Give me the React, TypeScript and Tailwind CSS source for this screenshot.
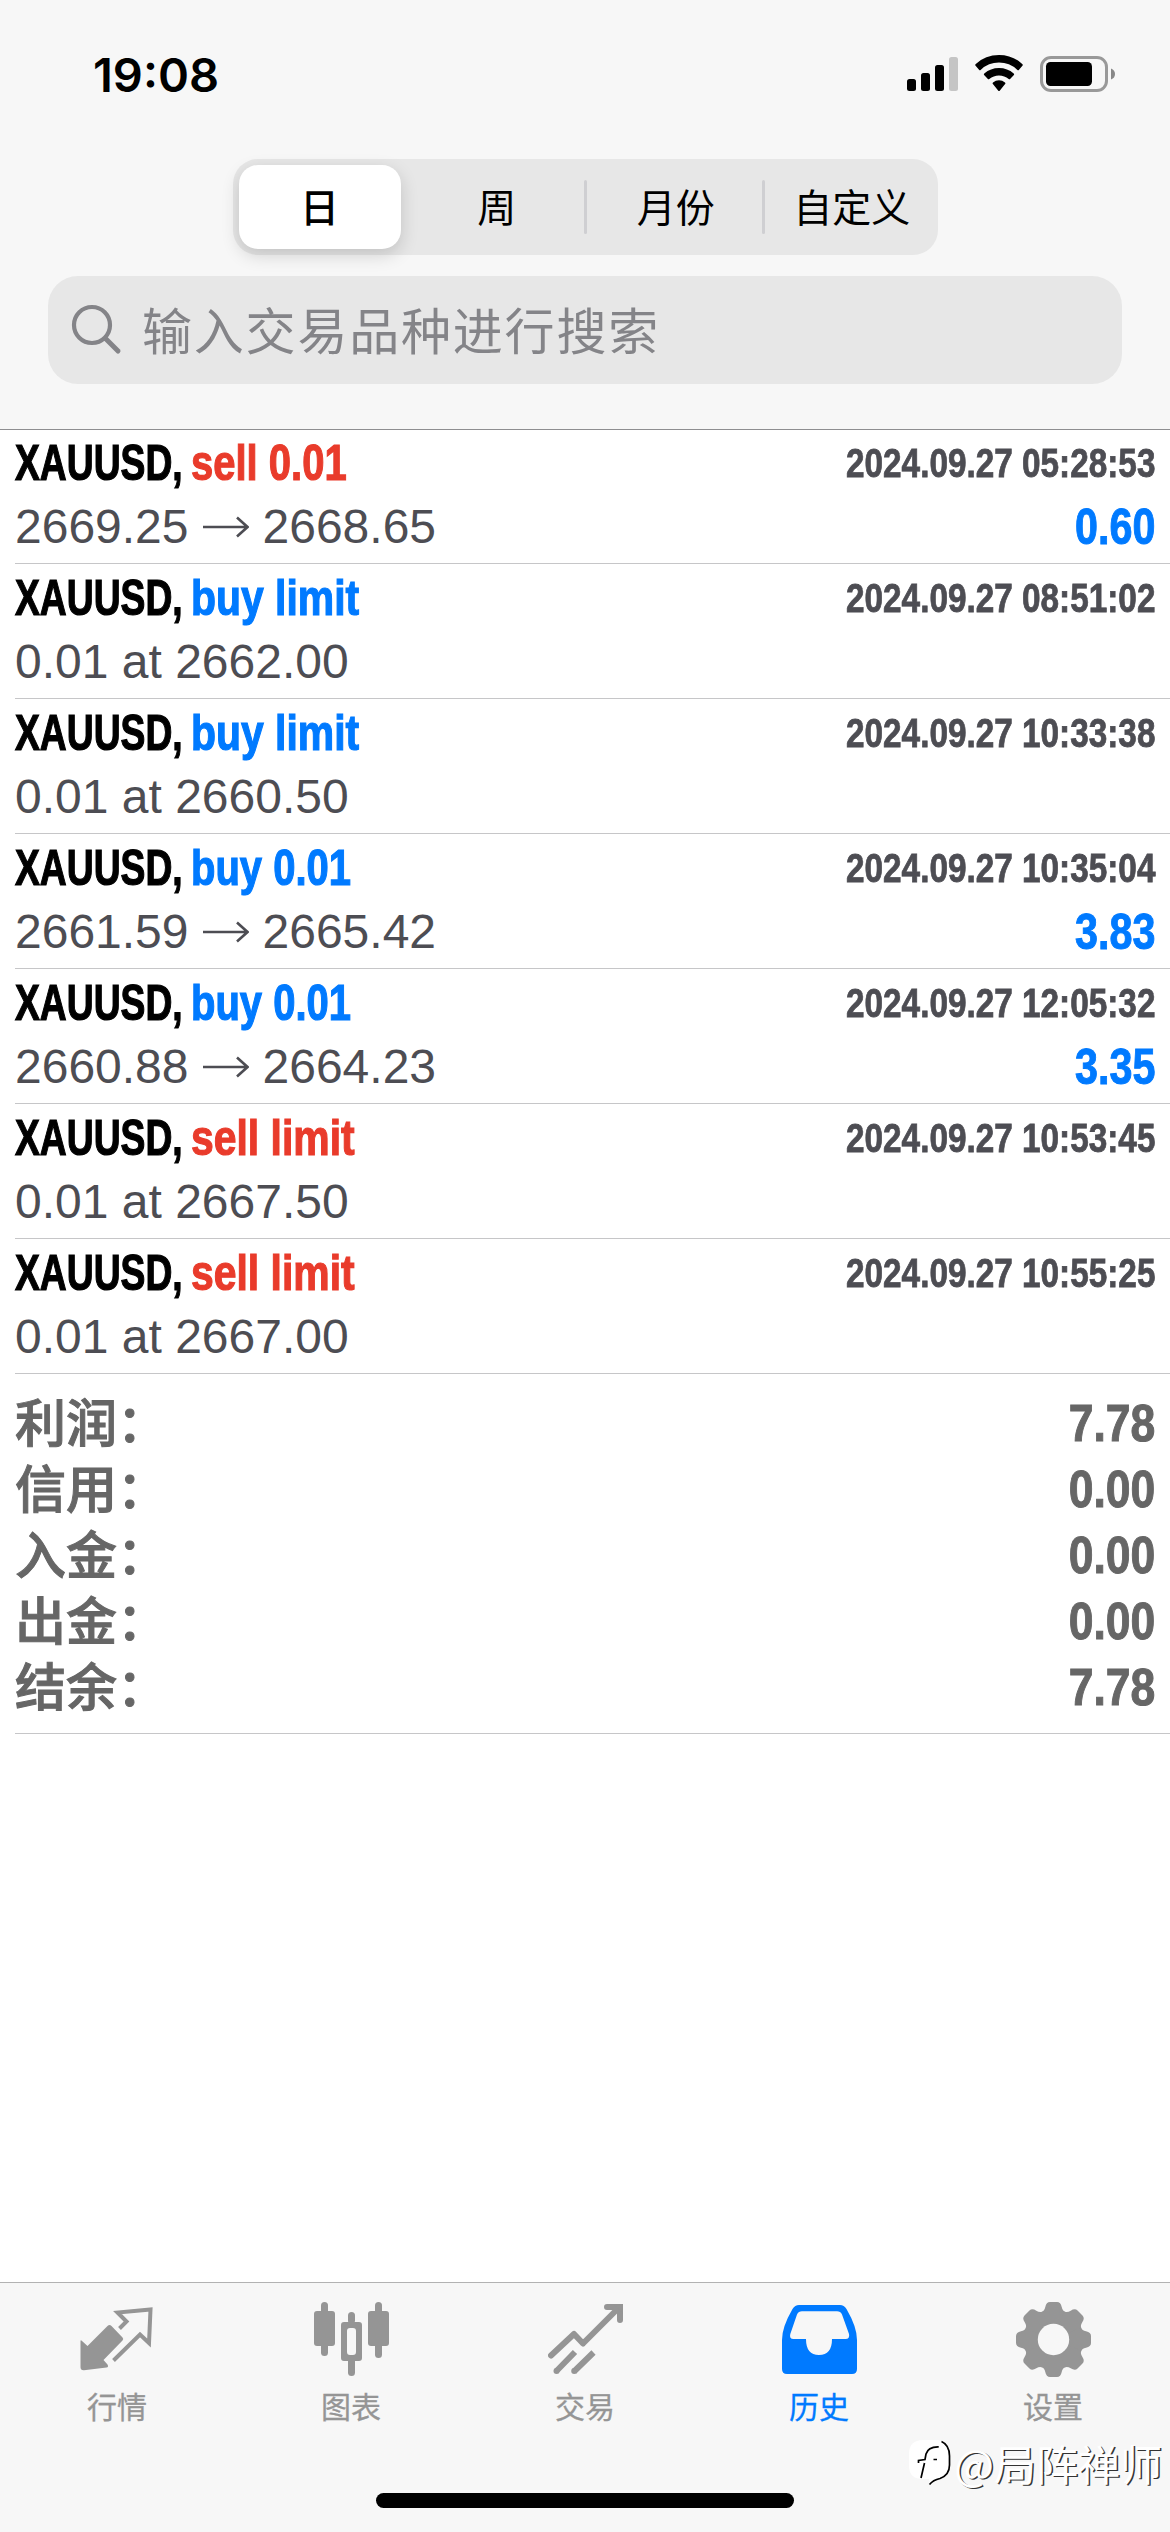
import React from 'react';

type Deal = {
  action: string;
  side: 'buy' | 'sell';
  time: string;
  from?: string;
  to?: string;
  order?: string;
  profit?: string;
};

const deals: Deal[] = [
  { action: 'sell 0.01', side: 'sell', time: '2024.09.27 05:28:53', from: '2669.25', to: '2668.65', profit: '0.60' },
  { action: 'buy limit', side: 'buy', time: '2024.09.27 08:51:02', order: '0.01 at 2662.00' },
  { action: 'buy limit', side: 'buy', time: '2024.09.27 10:33:38', order: '0.01 at 2660.50' },
  { action: 'buy 0.01', side: 'buy', time: '2024.09.27 10:35:04', from: '2661.59', to: '2665.42', profit: '3.83' },
  { action: 'buy 0.01', side: 'buy', time: '2024.09.27 12:05:32', from: '2660.88', to: '2664.23', profit: '3.35' },
  { action: 'sell limit', side: 'sell', time: '2024.09.27 10:53:45', order: '0.01 at 2667.50' },
  { action: 'sell limit', side: 'sell', time: '2024.09.27 10:55:25', order: '0.01 at 2667.00' },
];

const totals = [
  ['利润：', '7.78'],
  ['信用：', '0.00'],
  ['入金：', '0.00'],
  ['出金：', '0.00'],
  ['结余：', '7.78'],
];

function StatusBar() {
  return (
    <div className="flex h-[159px] items-start justify-between pl-[93px] pr-[54px]">
      <span className="mt-[46px] font-['Inter'] text-[47px] font-semibold leading-[58px]">19:08</span>
      <div className="mt-[55px] flex">
        <svg className="mr-[17px]" width="51" height="37" viewBox="0 0 51 37">
          <rect x="0" y="24" width="9" height="12" rx="2.5" />
          <rect x="14" y="18" width="9" height="18" rx="2.5" />
          <rect x="28" y="10" width="9" height="26" rx="2.5" />
          <rect x="42" y="2" width="9" height="34" rx="2.5" fill="#c5c5c5" />
        </svg>
        <svg className="mr-[17px]" width="48" height="37" viewBox="0 0 48 37">
          <path d="M0.4 10.6 Q-0.2 9.8 0.8 8.9 Q10.5 0 24 0 Q37.500 0 47.200 8.900 Q48.200 9.800 47.600 10.600 L43.800 15 Q43.200 15.600 42.400 14.900 Q34.500 7.600 24 7.600 Q13.500 7.600 5.600 14.900 Q4.800 15.600 4.200 15 Z" />
          <path d="M9.100 20 Q8.400 19.300 9.300 18.500 Q15.500 13 24 13 Q32.500 13 38.700 18.500 Q39.600 19.300 38.900 20 L35.100 24 Q34.500 24.600 33.700 24 Q29.500 20.400 24 20.400 Q18.500 20.400 14.300 24 Q13.500 24.600 12.900 24 Z" />
          <path d="M17.700 28.700 Q17.200 28 18 27.400 Q20.600 25.200 24 25.200 Q27.400 25.200 30 27.400 Q30.800 28 30.300 28.700 L24.700 35.700 Q24 36.400 23.300 35.700 Z" />
        </svg>
        <svg width="76" height="38" viewBox="0 0 76 38">
          <rect x="1.500" y="2.500" width="65" height="33" rx="9.500" fill="none" stroke="#999" strokeWidth="3" />
          <rect x="6" y="7" width="46" height="24" rx="4.500" />
          <path d="M71 13.500 Q75 15 75 19 Q75 23 71 24.500 Z" fill="#888" />
        </svg>
      </div>
    </div>
  );
}

function PeriodPicker() {
  const item = 'flex h-full w-[174.5px] shrink-0 items-center justify-center pb-[4px]';
  return (
    <div className="mx-auto flex h-24 w-[705px] items-center rounded-[25px] bg-[#e7e7e7] font-['Noto_Sans_CJK_SC',sans-serif] text-[39px] leading-none">
      <div className="ml-[6px] flex h-[84px] w-[162px] shrink-0 items-center justify-center rounded-[19px] bg-white pb-[4px] font-medium shadow-[0_6px_18px_rgba(0,0,0,0.16)]">
        日
      </div>
      <div className={item + ' ml-[9px]'}>周</div>
      <div className="h-[54px] w-[3px] shrink-0 rounded bg-[#cfcfd2]" />
      <div className={item + ' pl-[3px]'}>月份</div>
      <div className="h-[54px] w-[3px] shrink-0 rounded bg-[#cfcfd2]" />
      <div className={item}>自定义</div>
    </div>
  );
}

function SearchField() {
  return (
    <div className="mx-[48px] mt-[21px] flex h-[108px] items-center rounded-[30px] bg-[#e7e7e7] pl-[23px] text-[#848488]">
      <svg width="52" height="52" viewBox="0 0 52 52" fill="none" stroke="currentColor" strokeWidth="4.200" strokeLinecap="round">
        <circle cx="21" cy="21" r="18" />
        <path d="M34.500 34.500 L47 47" strokeWidth="5" />
      </svg>
      <span className="ml-[19px] pb-[4px] font-['Noto_Sans_CJK_SC',sans-serif] text-[50px] font-normal leading-[70px] tracking-[1.800px]">
        输入交易品种进行搜索
      </span>
    </div>
  );
}

function DealRow({ deal }: { deal: Deal }) {
  const color = deal.side === 'buy' ? 'text-[#007aff]' : 'text-[#e93b2b]';
  const width = deal.order ? 'scale-x-[0.818]' : 'scale-x-[0.800]';
  return (
    <div className="ml-[15px] h-[135px] border-b border-[#c6c6c8] pr-[15px] pt-[2px] text-[#4d4d53]">
      <div className="flex h-16 justify-between whitespace-nowrap font-bold leading-[64px]">
        <div className="flex text-[50px] [-webkit-text-stroke:1.200px]">
          <div className="w-[176px]">
            <span className="inline-block origin-left scale-x-[0.745] text-black">XAUUSD,</span>
          </div>
          <span className={`origin-left ${width} ${color}`}>{deal.action}</span>
        </div>
        <span className="origin-right scale-x-[0.833] text-[40px] [-webkit-text-stroke:0.800px]">{deal.time}</span>
      </div>
      <div className="flex h-16 items-center justify-between whitespace-nowrap text-[48px] leading-[64px]">
        {deal.from ? (
          <div className="flex items-center">
            <span>{deal.from}</span>
            <svg className="mx-[14px]" width="46" height="22" viewBox="0 0 46 22" fill="none" stroke="currentColor" strokeWidth="2.600">
              <path d="M0 11 H44 M34 1.500 L44.500 11 L34 20.500" />
            </svg>
            <span>{deal.to}</span>
          </div>
        ) : (
          <span>{deal.order}</span>
        )}
        {deal.profit && (
          <span className="origin-right scale-x-[0.825] text-[50px] font-bold text-[#007aff] [-webkit-text-stroke:1px]">
            {deal.profit}
          </span>
        )}
      </div>
    </div>
  );
}

function Totals() {
  return (
    <div className="ml-[15px] h-[360px] border-b border-[#c6c6c8] pr-[15px] pt-4 text-[#666]">
      {totals.map(([label, value]) => (
        <div key={label} className="flex h-[66px] items-start justify-between whitespace-nowrap">
          <span className="font-['Noto_Sans_CJK_SC',sans-serif] text-[51px] font-medium leading-[60px] [-webkit-text-stroke:1px]">
            {label}
          </span>
          <span className="origin-right scale-x-[0.855] text-[52px] font-bold leading-[66px] [-webkit-text-stroke:1px]">{value}</span>
        </div>
      ))}
    </div>
  );
}

const QuotesIcon = () => (
  <svg width="75" height="75" viewBox="0 0 75 75" fill="currentColor">
    <path d="M0.500 35 Q0.500 33 2 34.500 L7.500 39.500 L27.500 19.500 Q29.500 17.500 31.500 19.500 L42.500 31 Q44 32.500 42.500 34 L23.500 53.500 L27.500 58 Q29 60.500 26.500 61 L4 63.800 Q0.500 64 0.500 60.500 Z" transform="translate(0 4.500)" />
    <path d="M39.500 26.500 L46.500 19.500 L37.500 10.500 L70.500 7.500 L69 41 L60 32.500 L33.500 58.500" fill="none" stroke="currentColor" strokeWidth="4" />
  </svg>
);

const ChartIcon = () => (
  <svg width="75" height="75" viewBox="0 0 75 75" fill="currentColor">
    <rect x="7" y="0" width="7" height="54" rx="3.500" />
    <rect x="0" y="9" width="21" height="35" rx="3" />
    <rect x="61" y="0" width="7" height="56" rx="3.500" />
    <rect x="54" y="9" width="21" height="35" rx="3" />
    <rect x="34" y="10" width="7" height="12" rx="3.500" />
    <rect x="34" y="55" width="7" height="19" rx="3.500" />
    <path fillRule="evenodd" d="M30 20 H45 Q48 20 48 23 V56 Q48 59 45 59 H30 Q27 59 27 56 V23 Q27 20 30 20 Z M36 26 Q33 26 33 29 V50 Q33 53 36 53 H39 Q42 53 42 50 V29 Q42 26 39 26 Z" />
  </svg>
);

const TradeIcon = () => (
  <svg width="75" height="75" viewBox="0 0 75 75" fill="none" stroke="currentColor" strokeWidth="6">
    <path d="M3 53.500 L26 32 L35 41.500 L71 5.500" strokeLinecap="round" strokeLinejoin="round" />
    <path d="M59 5 H72 V18" strokeLinecap="round" />
    <path d="M66 2 H73 Q75 2 75 4 V12 Z" fill="currentColor" stroke="none" />
    <path d="M27 50 L8 69.500 M45.500 50.500 L26 69.500" />
    <circle cx="8.500" cy="69" r="3" fill="currentColor" stroke="none" />
    <circle cx="26.200" cy="69" r="3" fill="currentColor" stroke="none" />
  </svg>
);

const HistoryIcon = () => (
  <svg width="75" height="75" viewBox="0 0 75 75" fill="currentColor">
    <path
      fillRule="evenodd"
      d="M17 3 H58 Q62 3 64.500 7 Q75 25 75 38 V67 Q75 72 70 72 H5 Q0 72 0 67 V38 Q0 25 10.500 7 Q13 3 17 3 Z M20 9.200 Q16.500 9.200 15 12.500 L8.300 32 Q7 37 11.500 37 H24 Q24 53 37 53 Q50 53 50 37 H63.500 Q68 37 67 32 L60 12.500 Q58.500 9.200 55 9.200 Z"
    />
  </svg>
);

const GearIcon = () => (
  <svg width="75" height="75" viewBox="0 0 75 75">
    <mask id="hub">
      <rect width="75" height="75" fill="#fff" />
      <circle cx="37.500" cy="37.500" r="15.700" fill="#000" />
    </mask>
    <g mask="url(#hub)" fill="currentColor">
      <circle cx="37.500" cy="37.500" r="28" />
      {[0, 45, 90, 135, 180, 225, 270, 315].map((angle) => (
        <path
          key={angle}
          d="M25.500 10 Q28.500 9 29.300 5 Q30.300 0 34 0 H41 Q44.700 0 45.700 5 Q46.500 9 49.500 10 L37.500 37.500 Z"
          transform={`rotate(${angle} 37.500 37.500)`}
        />
      ))}
    </g>
  </svg>
);

const tabs = [
  { label: '行情', Icon: QuotesIcon },
  { label: '图表', Icon: ChartIcon },
  { label: '交易', Icon: TradeIcon },
  { label: '历史', Icon: HistoryIcon, active: true },
  { label: '设置', Icon: GearIcon },
];

function TabBar() {
  return (
    <div className="flex h-[250px] flex-col border-t border-[#b2b2b2] bg-[#f7f7f7]">
      <div className="flex h-[210px]">
        {tabs.map(({ label, Icon, active }) => (
          <div
            key={label}
            className={
              active
                ? 'flex flex-1 flex-col items-center pt-[19px] text-[#007aff]'
                : 'flex flex-1 flex-col items-center pt-[19px] text-[#959595]'
            }
          >
            <Icon />
            <span className="mt-[7px] font-['Noto_Sans_CJK_SC',sans-serif] text-[30px] leading-[42px] [-webkit-text-stroke:0.300px]">{label}</span>
          </div>
        ))}
      </div>
      <div className="mx-auto h-[15px] w-[418px] rounded-full bg-black" />
    </div>
  );
}

function AuthorMark() {
  return (
    <div className="absolute bottom-[41px] right-[8px] flex items-center text-white">
      <svg width="44" height="48" viewBox="0 0 44 48">
        <path d="M14 1 H26 Q40 1 40 15 V27 Q40 36 30 39.500 Q24 41.500 21 45 L20 40 H14 Q0 40 0 27 V15 Q0 1 14 1 Z" fill="#fff" />
        <g fill="none" stroke="#000" strokeWidth="1.700">
          <path d="M32.500 2.500 Q40.500 6 40.500 17 V26 Q40.500 36 31 39.500 Q24 41 20.500 45.500" />
          <path d="M29.700 7.800 Q19 7.500 17 15 L16 20.500 L9.500 21.500 V24 M15.500 24 L12 39 M24.500 20.500 H28" />
        </g>
      </svg>
      <span className="ml-px font-['Noto_Sans_CJK_SC',sans-serif] text-[42px] leading-[56px] [text-shadow:1.500px_1px_0_#333]">
        @局阵禅师
      </span>
    </div>
  );
}

export default function App() {
  return (
    <div className="relative flex h-[2532px] w-[1170px] flex-col overflow-hidden bg-white font-['Liberation_Sans',Arial,sans-serif] text-black">
      <header className="h-[430px] border-b border-[#8e8e90] bg-[#f7f7f7]">
        <StatusBar />
        <PeriodPicker />
        <SearchField />
      </header>
      <main className="-mt-px flex-1">
        {deals.map((deal) => (
          <DealRow key={deal.time} deal={deal} />
        ))}
        <Totals />
      </main>
      <TabBar />
      <AuthorMark />
    </div>
  );
}
